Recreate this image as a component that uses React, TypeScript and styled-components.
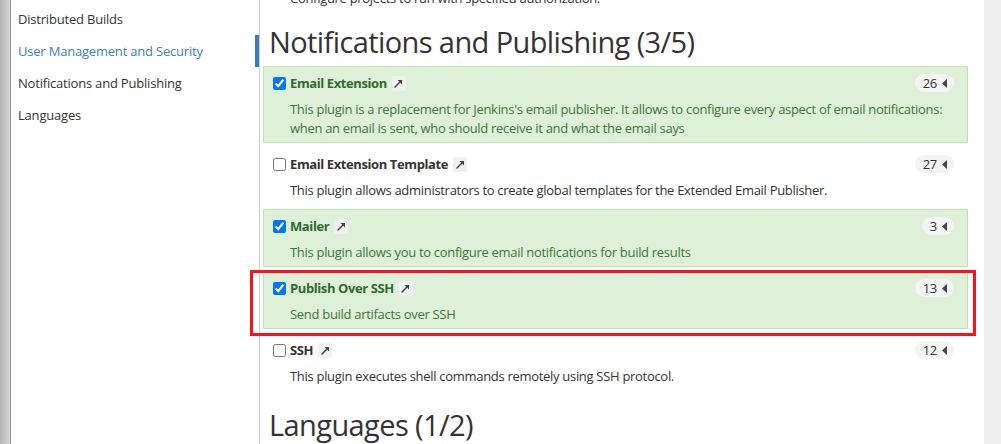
import React from "react";
import styled, { createGlobalStyle } from "styled-components";

const GlobalStyle = createGlobalStyle`
  html, body { margin: 0; padding: 0; background: #fff; }
  body { font-family: "Open Sans", "Noto Sans", "Liberation Sans", sans-serif; color: #333; }
  * { box-sizing: border-box; }
`;

const Page = styled.div`
  display: flex;
  width: 1001px;
  height: 444px;
  overflow: hidden;
  position: relative;
  background: #fff;
`;

const EdgeShadow = styled.div`
  width: 11px;
  flex: none;
  background: linear-gradient(to right, #b4b4b4, #d6d6d6);
  border-right: 1px solid #8e8e8e;
`;

const Sidebar = styled.nav`
  width: 249px;
  flex: none;
  padding-top: 3px;
  border-right: 1px solid #d0d0d0;
  display: flex;
  flex-direction: column;
`;

const NavItem = styled.div<{ $active?: boolean }>`
  height: 32px;
  line-height: 32px;
  padding-left: 7px;
  font-size: 13px;
  letter-spacing: -0.2px;
  color: ${(p) => (p.$active ? "#3a7fc1" : "#333")};
  border-right: 4px solid ${(p) => (p.$active ? "#3a7bbf" : "transparent")};
  white-space: nowrap;
`;

const Main = styled.main`
  flex: 1;
  padding: 0 16px 0 3px;
  display: flex;
  flex-direction: column;
  gap: 4px;
  position: relative;
`;

const CutText = styled.div`
  margin-top: -11px;
  padding-left: 27px;
  font-size: 13px;
  line-height: 19px;
  letter-spacing: -0.3px;
  color: #333;
`;

const Heading = styled.h2<{ $top?: number }>`
  margin: ${(p) => p.$top ?? 12}px 0 2px 6px;
  font-size: 29px;
  font-weight: 400;
  line-height: 36px;
  letter-spacing: -0.6px;
  color: #333;
  white-space: nowrap;
`;

const Plugin = styled.div<{ $on?: boolean }>`
  border: 1px solid ${(p) => (p.$on ? "#bfe3ad" : "transparent")};
  background: ${(p) => (p.$on ? "#dff0d8" : "transparent")};
  border-radius: 1px;
  padding: 6px 13px 4px 9px;
  color: ${(p) => (p.$on ? "#3c763d" : "#333")};
`;

const TitleRow = styled.div`
  display: flex;
  align-items: center;
  height: 20px;
  margin-bottom: 7px;
`;

const Check = styled.input`
  width: 13px;
  height: 13px;
  margin: 0 4px 0 0;
  flex: none;
`;

const Name = styled.span<{ $on?: boolean }>`
  font-size: 13px;
  font-weight: 700;
  letter-spacing: -0.4px;
  color: ${(p) => (p.$on ? "#2f6b2f" : "#333")};
  white-space: nowrap;
`;

const LinkBox = styled.span`
  display: inline-flex;
  align-items: center;
  justify-content: center;
  width: 14px;
  height: 15px;
  margin-left: 5px;
  background: #f1f1f1;
  border-radius: 2px;
`;

const Badge = styled.span`
  margin-left: auto;
  display: inline-flex;
  align-items: center;
  gap: 5px;
  height: 18px;
  padding: 0 7px 0 8px;
  border-radius: 9px;
  background: #f4f4f4;
  font-size: 13px;
  letter-spacing: -0.3px;
  color: #333;
`;

const Desc = styled.div`
  padding-left: 17px;
  font-size: 13px;
  line-height: 19px;
  letter-spacing: -0.3px;
`;

const ScrollTrack = styled.div`
  width: 17px;
  flex: none;
  background: #f0f0f0;
`;

const Highlight = styled.div`
  position: absolute;
  left: 250px;
  top: 270px;
  width: 726px;
  height: 66px;
  border: 3px solid #f5141b;
  pointer-events: none;
`;

const Arrow = () => (
  <svg width="9" height="9" viewBox="0 0 9 9">
    <path d="M1 8 L6.5 2.5" stroke="#444" strokeWidth="1.5" strokeLinecap="round" />
    <path d="M3.5 1 L8 1 L8 5.5 Z" fill="#444" />
  </svg>
);

const Tri = () => (
  <svg width="5" height="9" viewBox="0 0 5 9">
    <path d="M5 0 L0 4.5 L5 9 Z" fill="#444" />
  </svg>
);

type P = { name: string; on: boolean; count: number; desc: string };

const plugins: P[] = [
  {
    name: "Email Extension",
    on: true,
    count: 26,
    desc:
      "This plugin is a replacement for Jenkins's email publisher. It allows to configure every aspect of email notifications: when an email is sent, who should receive it and what the email says",
  },
  {
    name: "Email Extension Template",
    on: false,
    count: 27,
    desc: "This plugin allows administrators to create global templates for the Extended Email Publisher.",
  },
  {
    name: "Mailer",
    on: true,
    count: 3,
    desc: "This plugin allows you to configure email notifications for build results",
  },
  {
    name: "Publish Over SSH",
    on: true,
    count: 13,
    desc: "Send build artifacts over SSH",
  },
  {
    name: "SSH",
    on: false,
    count: 12,
    desc: "This plugin executes shell commands remotely using SSH protocol.",
  },
];

export default function App() {
  return (
    <>
      <GlobalStyle />
      <Page>
        <EdgeShadow />
        <Sidebar>
          <NavItem>Distributed Builds</NavItem>
          <NavItem $active>User Management and Security</NavItem>
          <NavItem>Notifications and Publishing</NavItem>
          <NavItem>Languages</NavItem>
        </Sidebar>
        <Main>
          <CutText>Configure projects to run with specified authorization.</CutText>
          <Heading $top={12}>Notifications and Publishing (3/5)</Heading>
          {plugins.map((p) => (
            <Plugin key={p.name} $on={p.on}>
              <TitleRow>
                <Check type="checkbox" checked={p.on} readOnly />
                <Name $on={p.on}>{p.name}</Name>
                <LinkBox>
                  <Arrow />
                </LinkBox>
                <Badge>
                  {p.count}
                  <Tri />
                </Badge>
              </TitleRow>
              <Desc>{p.desc}</Desc>
            </Plugin>
          ))}
          <Heading $top={12}>Languages (1/2)</Heading>
        </Main>
        <ScrollTrack />
        <Highlight />
      </Page>
    </>
  );
}
